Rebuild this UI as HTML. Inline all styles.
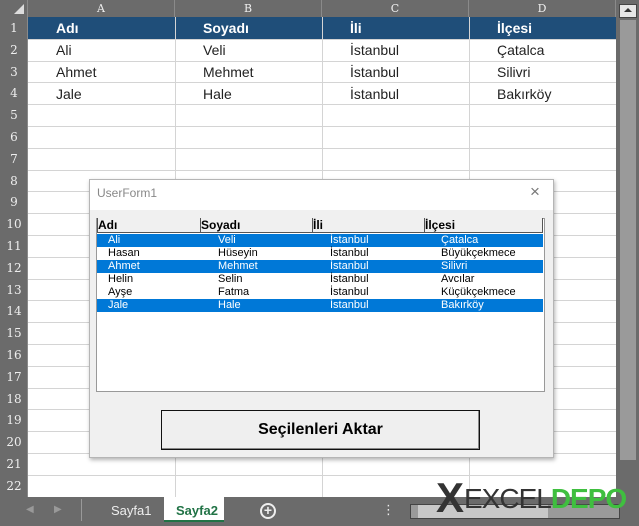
<!DOCTYPE html><html><head><meta charset="utf-8"><style>
*{margin:0;padding:0;box-sizing:border-box}
body{width:639px;height:526px;overflow:hidden;background:#fff;font-family:"Liberation Sans","DejaVu Sans",sans-serif;position:relative}
.a{position:absolute}
.hl{position:absolute;left:28px;width:588px;height:1px;background:#d4d4d4}
.vl{position:absolute;top:17px;width:1px;height:480px;background:#d4d4d4}
.rh{position:absolute;left:0;width:28px;color:#eee;font-size:12px;text-align:center;font-family:"DejaVu Serif",serif}
.ch{position:absolute;top:0;height:17px;color:#eee;font-size:11px;text-align:center;line-height:17px;border-right:1px solid #8a8a8a;font-family:"DejaVu Serif",serif}
.c{position:absolute;font-size:14px;color:#222}
.lr{position:absolute;left:97px;width:446px;height:13px;font-size:11px;line-height:13px}
.lr span{position:absolute}
</style></head><body>
<div class="a" style="left:0;top:0;width:639px;height:17px;background:#6b6b6b"></div>
<div class="a" style="left:0;top:0;width:28px;height:497px;background:#6b6b6b"></div>
<div class="a" style="left:27px;top:0;width:1px;height:497px;background:#8a8a8a"></div>
<div class="a" style="left:14px;top:4px;width:0;height:0;border-left:10px solid transparent;border-bottom:10px solid #ddd"></div>
<div class="ch" style="left:28px;width:147px">A</div>
<div class="ch" style="left:175px;width:147px">B</div>
<div class="ch" style="left:322px;width:147px">C</div>
<div class="ch" style="left:469px;width:147px">D</div>
<div class="a" style="left:28px;top:17px;width:588px;height:22px;background:#1f4e79"></div>
<div class="vl" style="left:175px"></div><div class="vl" style="left:322px"></div><div class="vl" style="left:469px"></div>
<div id="rows"></div>
<div class="c" style="left:56px;top:20px;color:#fff;font-weight:bold">Adı</div>
<div class="c" style="left:203px;top:20px;color:#fff;font-weight:bold">Soyadı</div>
<div class="c" style="left:350px;top:20px;color:#fff;font-weight:bold">İli</div>
<div class="c" style="left:497px;top:20px;color:#fff;font-weight:bold">İlçesi</div>
<div class="c" style="left:56px;top:42px">Ali</div><div class="c" style="left:203px;top:42px">Veli</div><div class="c" style="left:350px;top:42px">İstanbul</div><div class="c" style="left:497px;top:42px">Çatalca</div>
<div class="c" style="left:56px;top:64px">Ahmet</div><div class="c" style="left:203px;top:64px">Mehmet</div><div class="c" style="left:350px;top:64px">İstanbul</div><div class="c" style="left:497px;top:64px">Silivri</div>
<div class="c" style="left:56px;top:86px">Jale</div><div class="c" style="left:203px;top:86px">Hale</div><div class="c" style="left:350px;top:86px">İstanbul</div><div class="c" style="left:497px;top:86px">Bakırköy</div>
<script>
var h='';for(var i=1;i<=22;i++){var t=17+(i-1)*21.8;h+='<div class="hl" style="top:'+Math.round(t+21.8)+'px"></div><div class="rh" style="top:'+Math.round(t+4)+'px">'+i+'</div>';}
document.getElementById('rows').innerHTML=h;
</script>
<div class="a" style="left:616px;top:0;width:23px;height:497px;background:#6b6b6b"></div>
<div class="a" style="left:620px;top:20px;width:16px;height:440px;background:#9a9a9a"></div>
<div class="a" style="left:619px;top:4px;width:18px;height:14px;background:#e6e6e6;border:1px solid #444"></div>
<div class="a" style="left:624px;top:8px;border-left:4px solid transparent;border-right:4px solid transparent;border-bottom:4px solid #333"></div>
<div class="a" style="left:0;top:497px;width:639px;height:29px;background:#6b6b6b"></div>
<div class="a" style="left:26px;top:504px;color:#999;font-size:10px">◀</div>
<div class="a" style="left:54px;top:504px;color:#999;font-size:10px">▶</div>
<div class="a" style="left:81px;top:499px;width:1px;height:22px;background:#999"></div>
<div class="a" style="left:111px;top:503px;color:#eee;font-size:13px">Sayfa1</div>
<div class="a" style="left:164px;top:497px;width:60px;height:25px;background:#fff;border-bottom:2px solid #217346"></div>
<div class="a" style="left:176px;top:503px;color:#217346;font-size:13px;font-weight:bold">Sayfa2</div>
<div class="a" style="left:260px;top:503px;width:16px;height:16px;border:2px solid #eee;border-radius:50%;color:#eee;font-size:14px;line-height:11px;text-align:center;font-weight:bold">+</div>
<div class="a" style="left:382px;top:502px;color:#eee;font-size:13px">⋮</div>
<div class="a" style="left:410px;top:504px;width:210px;height:15px;background:#9a9a9a;border:1px solid #444"></div>
<div class="a" style="left:418px;top:505px;width:130px;height:13px;background:#c8c8c8"></div>
<div class="a" style="left:436px;top:474px;font-size:42px;font-weight:bold;color:#333;letter-spacing:-2px">X</div>
<div class="a" style="left:464px;top:483px;font-size:28px;color:#333;letter-spacing:-1px">EXCEL<span style="color:#3fbf3f;font-weight:bold">DEPO</span></div>
<div class="a" style="left:89px;top:179px;width:465px;height:279px;background:#f0f0f0;border:1px solid #b5b5b5;box-shadow:1px 2px 4px rgba(0,0,0,.3)"></div>
<div class="a" style="left:90px;top:180px;width:463px;height:30px;background:#fff"></div>
<div class="a" style="left:97px;top:186px;font-size:12px;color:#888">UserForm1</div>
<div class="a" style="left:530px;top:182px;font-size:17px;color:#777">×</div>
<div class="a" style="left:96px;top:218px;width:449px;height:174px;background:#fff;border:1px solid #999"></div>
<div class="a" style="left:97px;top:218px;width:446px;height:15px;background:#f0f0f0;font-size:12px;font-weight:bold;line-height:15px">
<span class="a" style="left:0;width:104px;border-right:1px solid #555;border-left:1px solid #555;height:15px">Adı</span>
<span class="a" style="left:104px;width:112px;border-right:1px solid #555;height:15px">Soyadı</span>
<span class="a" style="left:216px;width:112px;border-right:1px solid #555;height:15px">İli</span>
<span class="a" style="left:328px;width:118px;border-right:1px solid #555;height:15px">İlçesi</span>
<span class="a" style="left:0;top:14px;width:446px;height:1px;background:#555"></span></div>
<div class="lr" style="top:234px;background:#0078d7;color:#fff"><span style="left:11px">Ali</span><span style="left:121px">Veli</span><span style="left:233px">İstanbul</span><span style="left:344px">Çatalca</span></div>
<div class="lr" style="top:247px"><span style="left:11px">Hasan</span><span style="left:121px">Hüseyin</span><span style="left:233px">İstanbul</span><span style="left:344px">Büyükçekmece</span></div>
<div class="lr" style="top:260px;background:#0078d7;color:#fff"><span style="left:11px">Ahmet</span><span style="left:121px">Mehmet</span><span style="left:233px">İstanbul</span><span style="left:344px">Silivri</span></div>
<div class="lr" style="top:273px"><span style="left:11px">Helin</span><span style="left:121px">Selin</span><span style="left:233px">İstanbul</span><span style="left:344px">Avcılar</span></div>
<div class="lr" style="top:286px"><span style="left:11px">Ayşe</span><span style="left:121px">Fatma</span><span style="left:233px">İstanbul</span><span style="left:344px">Küçükçekmece</span></div>
<div class="lr" style="top:299px;background:#0078d7;color:#fff"><span style="left:11px">Jale</span><span style="left:121px">Hale</span><span style="left:233px">İstanbul</span><span style="left:344px">Bakırköy</span></div>
<div class="a" style="left:161px;top:410px;width:319px;height:40px;background:#efefef;border:1px solid #111;box-shadow:inset -1px -1px 0 #888;font-size:16px;font-weight:bold;text-align:center;line-height:38px">Seçilenleri Aktar</div>
</body></html>
